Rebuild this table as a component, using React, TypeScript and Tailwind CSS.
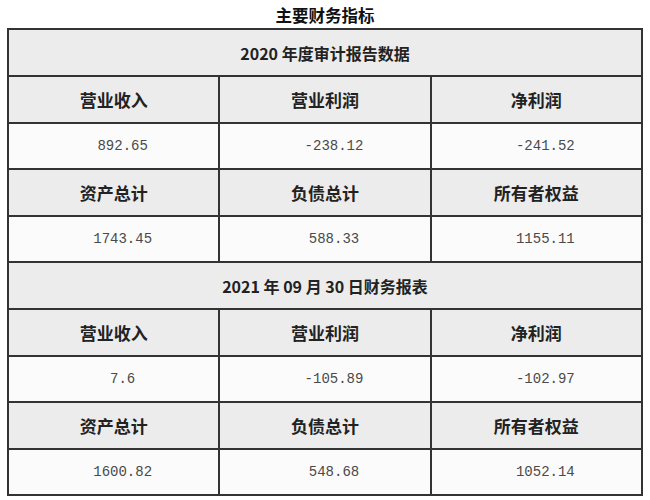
import { Fragment } from "react"

const font = "font-['Microsoft_YaHei','Noto_Sans_CJK_SC',sans-serif]"

type Section = {
  title: string
  rows: { labels: string[]; values: string[] }[]
}

const sections: Section[] = [
  {
    title: "2020 年度审计报告数据",
    rows: [
      { labels: ["营业收入", "营业利润", "净利润"], values: ["892.65", "-238.12", "-241.52"] },
      { labels: ["资产总计", "负债总计", "所有者权益"], values: ["1743.45", "588.33", "1155.11"] },
    ],
  },
  {
    title: "2021 年 09 月 30 日财务报表",
    rows: [
      { labels: ["营业收入", "营业利润", "净利润"], values: ["7.6", "-105.89", "-102.97"] },
      { labels: ["资产总计", "负债总计", "所有者权益"], values: ["1600.82", "548.68", "1052.14"] },
    ],
  },
]

export default function App() {
  return (
    <div className={`w-[650px] h-[500px] bg-white ${font}`}>
      {/* Title */}
      <div className="h-[28px] pt-[2px] flex items-center justify-center text-[16.5px] font-bold text-[#111]">
        主要财务指标
      </div>

      <table className="ml-[7px] w-[636px] table-fixed border-collapse border-2 border-[#333]">
        <tbody>
          {sections.map((s) => (
            <Fragment key={s.title}>
              <tr className="h-[47px] bg-[#ececec]">
                <td colSpan={3} className="border-2 border-[#333] text-center text-[16px] font-bold text-[#222]">
                  {s.title}
                </td>
              </tr>
              {s.rows.map((r, i) => (
                <Fragment key={i}>
                  <tr className="h-[47px] bg-[#ececec]">
                    {r.labels.map((l) => (
                      <td key={l} className="border-2 border-[#333] text-center text-[17px] font-bold text-[#222]">
                        {l}
                      </td>
                    ))}
                  </tr>
                  <tr className="h-[46px] bg-[#fbfbfb]">
                    {r.values.map((v, j) => (
                      <td
                        key={j}
                        className="border-2 border-[#333] pl-[18px] text-center font-['Liberation_Mono',monospace] text-[14px] text-[#4a4a4a]"
                      >
                        {v}
                      </td>
                    ))}
                  </tr>
                </Fragment>
              ))}
            </Fragment>
          ))}
        </tbody>
      </table>
    </div>
  )
}
